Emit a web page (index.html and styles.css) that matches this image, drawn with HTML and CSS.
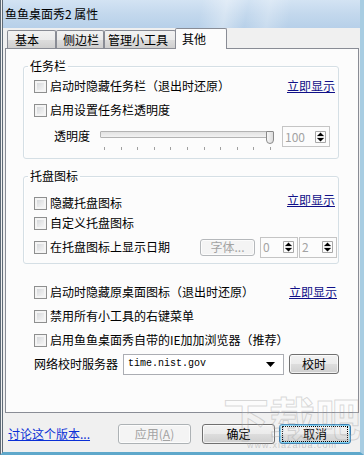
FILE: index.html
```html
<!DOCTYPE html>
<html lang="zh-CN">
<head>
  <meta charset="UTF-8">
  <title>鱼鱼桌面秀2 属性</title>
  <link rel="stylesheet" href="styles.css">
</head>
<body>
<div class="window">
  <div class="titlebar">鱼鱼桌面秀2 属性</div>

  <div class="tabs">
    <span class="tab tab-basic">基本</span>
    <span class="tab tab-side">侧边栏</span>
    <span class="tab tab-tools">管理小工具</span>
    <span class="tab tab-other active">其他</span>
  </div>

  <div class="panel">
    <fieldset class="group group-taskbar">
      <legend>任务栏</legend>
      <div class="row">
        <span class="check"></span><span>启动时隐藏任务栏（退出时还原）</span>
        <a class="link">立即显示</a>
      </div>
      <div class="row">
        <span class="check"></span><span>启用设置任务栏透明度</span>
      </div>
      <div class="row row-slider">
        <span class="slider-label">透明度</span>
        <div class="slider">
          <div class="track-wrap">
            <div class="track"></div>
            <span class="thumb"></span>
          </div>
          <div class="ticks">
            <i></i><i></i><i></i><i></i><i></i><i></i><i></i><i></i><i></i><i></i><i></i>
          </div>
        </div>
        <span class="spin spin-alpha"><span class="spin-val">100</span>
          <svg class="spin-btn" width="13" height="14" viewBox="0 0 13 14">
            <path d="M1.5 1.5h10v11h-10z" fill="none" stroke="#a7a7a7"/>
            <path d="M3 6h7M3 8h7" stroke="#c8c8c8"/>
            <path d="M6.5 2.5l3.5 3.5h-7z M6.5 11.5l3.5-3.5h-7z" fill="#000"/>
          </svg>
        </span>
      </div>
    </fieldset>

    <fieldset class="group group-tray">
      <legend>托盘图标</legend>
      <div class="row">
        <span class="check"></span><span>隐藏托盘图标</span>
        <a class="link link-high">立即显示</a>
      </div>
      <div class="row">
        <span class="check"></span><span>自定义托盘图标</span>
      </div>
      <div class="row row-date">
        <span class="check"></span><span>在托盘图标上显示日期</span>
        <span class="btn btn-font">字体...</span>
        <span class="spin spin-small"><span class="spin-val">0</span>
          <svg class="spin-btn" width="13" height="14" viewBox="0 0 13 14">
            <path d="M1.5 1.5h10v11h-10z" fill="none" stroke="#a7a7a7"/>
            <path d="M3 6h7M3 8h7" stroke="#c8c8c8"/>
            <path d="M6.5 2.5l3.5 3.5h-7z M6.5 11.5l3.5-3.5h-7z" fill="#000"/>
          </svg>
        </span>
        <span class="spin spin-small spin-last"><span class="spin-val">2</span>
          <svg class="spin-btn" width="13" height="14" viewBox="0 0 13 14">
            <path d="M1.5 1.5h10v11h-10z" fill="none" stroke="#a7a7a7"/>
            <path d="M3 6h7M3 8h7" stroke="#c8c8c8"/>
            <path d="M6.5 2.5l3.5 3.5h-7z M6.5 11.5l3.5-3.5h-7z" fill="#000"/>
          </svg>
        </span>
      </div>
    </fieldset>

    <div class="misc">
      <div class="row">
        <span class="check"></span><span>启动时隐藏原桌面图标（退出时还原）</span>
        <a class="link">立即显示</a>
      </div>
      <div class="row">
        <span class="check"></span><span>禁用所有小工具的右键菜单</span>
      </div>
      <div class="row">
        <span class="check"></span><span>启用鱼鱼桌面秀自带的IE加加浏览器（推荐）</span>
      </div>
      <div class="row">
        <span>网络校时服务器</span>
        <span class="combo"><span class="combo-text">time.nist.gov</span>
          <svg width="9" height="5" viewBox="0 0 9 5"><path d="M0 0h9l-4.5 5z" fill="#000"/></svg>
        </span>
        <span class="btn btn-sync">校时</span>
      </div>
    </div>
  </div>

  <div class="footer">
    <a class="about">讨论这个版本...</a>
    <span class="btn btn-apply">应用(<u>A</u>)</span>
    <span class="btn btn-ok">确定</span>
    <span class="btn btn-cancel"><span class="focus">取消</span></span>
  </div>

  <div class="watermark">下载吧<small>www.xiazaiba.com</small></div>
</div>
</body>
</html>
```

FILE: styles.css
```css
* {
  box-sizing: border-box;
}
body {
  margin: 0;
  font: 12px/14px "Noto Sans CJK SC", "Liberation Sans", sans-serif;
  color: #000;
  background: #fff;
}
.window {
  position: relative;
  width: 364px;
  height: 455px;
  overflow: hidden;
  background: #f0f0f0;
  border-left: 3px double #5f6b77;
  border-right: 4px solid #a8cde2;
  border-bottom: 3px solid #5fa8cb;
}
.titlebar {
  height: 28px;
  padding-left: 2px;
  line-height: 27px;
  font-size: 12px;
  background:
    linear-gradient(100deg, rgba(255,255,255,0) 55%, rgba(255,255,255,0.35) 62%, rgba(255,255,255,0) 68%, rgba(255,255,255,0.25) 74%, rgba(255,255,255,0) 80%),
    linear-gradient(180deg, #d3e3f3 0%, #c3d8ed 50%, #b7d0e9 100%);
}

/* tabs */
.tabs {
  display: flex;
  align-items: flex-end;
  height: 20px;
  padding-left: 4px;
}
.tab {
  height: 18px;
  padding-left: 6px;
  line-height: 17px;
  border: 1px solid #898c95;
  border-bottom: none;
  border-radius: 2px 2px 0 0;
  background: linear-gradient(180deg, #f2f2f2 0%, #ebebeb 50%, #dddddd 51%, #cfcfcf 100%);
  white-space: nowrap;
}
.tab-basic { width: 49px; padding-left: 7px; }
.tab-side { width: 48px; }
.tab-tools { width: 72px; padding-left: 3px; }
.tab-other { width: 52px; margin-left: -1px; }
.tab.active {
  position: relative;
  z-index: 1;
  height: 21px;
  margin-bottom: -1px;
  line-height: 19px;
  background: #fcfcfc;
}

/* panel */
.panel {
  height: 365px;
  margin: 0 1px 0 2px;
  padding: 0 19px 0 17px;
  border: 1px solid #898c95;
  background: #fcfcfc;
}
.group {
  margin: 10px 0 0;
  padding: 1px 1px 6px 10px;
  min-inline-size: 0;
  border: 1px solid #d5dfe5;
  border-radius: 3px;
  box-shadow: inset 1px 1px 0 #fff;
}
.group legend {
  margin-left: -6px;
  padding: 0 2px;
  line-height: 14px;
}
.group-tray {
  padding-top: 10px;
  padding-bottom: 4px;
}
.row {
  display: flex;
  align-items: center;
  height: 24px;
  white-space: nowrap;
}
.group-tray .row {
  height: 20px;
}
.group-tray .row-date {
  height: 24px;
  margin-top: 2px;
}
.check {
  flex: none;
  width: 13px;
  height: 13px;
  margin-right: 3px;
  border: 1px solid #8e8f8f;
  background: linear-gradient(135deg, #cdd0d4 0%, #e8e9ea 55%, #fafafa 100%);
  box-shadow: inset 0 0 0 2px #f4f4f4;
}
.link {
  margin-left: auto;
  margin-right: 2px;
  color: #101088;
  text-decoration: underline;
}
.link-high {
  align-self: flex-start;
}

/* transparency slider */
.row-slider {
  align-items: flex-start;
  height: 30px;
}
.slider-label {
  margin: 7px 10px 0 20px;
}
.slider {
  width: 174px;
  margin-top: 7px;
}
.track-wrap {
  position: relative;
  height: 13px;
}
.track {
  width: 173px;
  height: 7px;
  margin-top: 2px;
  border: 1px solid #b3b3b3;
  border-radius: 1px;
  background: linear-gradient(180deg, #e2e2e2, #f2f2f2);
}
.thumb {
  position: absolute;
  right: 0;
  top: 0;
  width: 8px;
  height: 13px;
  border: 1px solid #8a8a8a;
  border-radius: 1px 1px 4px 4px;
  background: linear-gradient(90deg, #f6f6f6, #dcdcdc);
}
.ticks {
  display: flex;
  justify-content: space-between;
  margin-top: 3px;
  padding: 0 3px 0 4px;
}
.ticks i {
  width: 1px;
  height: 3px;
  background: #a0a0a0;
}

/* spin boxes */
.spin {
  display: flex;
  align-items: center;
  justify-content: space-between;
  height: 21px;
  padding: 0 2px 0 2px;
  border: 1px solid #c5c5c5;
  background: #fcfcfc;
  color: #a3a3a3;
}
.spin-alpha {
  width: 48px;
  margin: 4px 7px 0 8px;
}
.spin-small {
  width: 38px;
}
.spin-last {
  margin-left: 1px;
}
.spin-btn {
  flex: none;
}

/* buttons */
.btn {
  display: flex;
  align-items: center;
  justify-content: center;
  border: 1px solid #707070;
  border-radius: 3px;
  background: linear-gradient(180deg, #f2f2f2 0%, #ebebeb 50%, #dddddd 51%, #cfcfcf 100%);
  box-shadow: inset 0 0 0 1px rgba(255,255,255,0.7);
}
.btn-font {
  width: 55px;
  height: 17px;
  margin: 0 5px 0 auto;
  border-color: #b5b8bb;
  background: #f4f4f4;
  color: #a3a3a3;
}
.combo {
  display: flex;
  align-items: center;
  justify-content: space-between;
  width: 161px;
  height: 21px;
  margin-left: 5px;
  padding: 0 8px 0 4px;
  border: 1px solid #abadb3;
  background: #fff;
}
.combo-text {
  font: 10px/12px "Liberation Mono", monospace;
}
.btn-sync {
  width: 50px;
  height: 20px;
  margin-left: 5px;
}

.misc {
  margin-top: 16px;
  padding-left: 11px;
}

/* footer */
.footer {
  display: flex;
  align-items: center;
  height: 39px;
  padding: 2px 9px 0 5px;
}
.about {
  color: #0a2fd6;
  text-decoration: underline;
}
.footer .btn {
  width: 73px;
  height: 20px;
}
.btn-apply {
  margin-left: auto;
  border-color: #adb2b5;
  background: #f4f4f4;
  color: #a3a3a3;
}
.btn-apply u {
  text-decoration: underline;
}
.btn-ok {
  margin-left: 11px;
}
.footer .btn-cancel {
  width: 72px;
  margin-left: 4px;
  border-color: #3c7fb1;
  box-shadow: inset 0 0 0 1px #7fd4f5;
}
.focus {
  padding: 0 20px;
  line-height: 14px;
  outline: 1px dotted #000;
  outline-offset: 0;
}

/* watermark over the lower right corner */
.watermark {
  position: absolute;
  right: -2px;
  bottom: 2px;
  width: 140px;
  text-align: center;
  font: bold 46px/48px "Noto Sans CJK SC", sans-serif;
  color: rgba(255,255,255,0.15);
  -webkit-text-stroke: 1px rgba(150,150,150,0.35);
  pointer-events: none;
}
.watermark small {
  display: block;
  font: 9px/10px "Liberation Sans", sans-serif;
  -webkit-text-stroke: 0;
  color: rgba(140,140,140,0.4);
  letter-spacing: 1px;
}
```
